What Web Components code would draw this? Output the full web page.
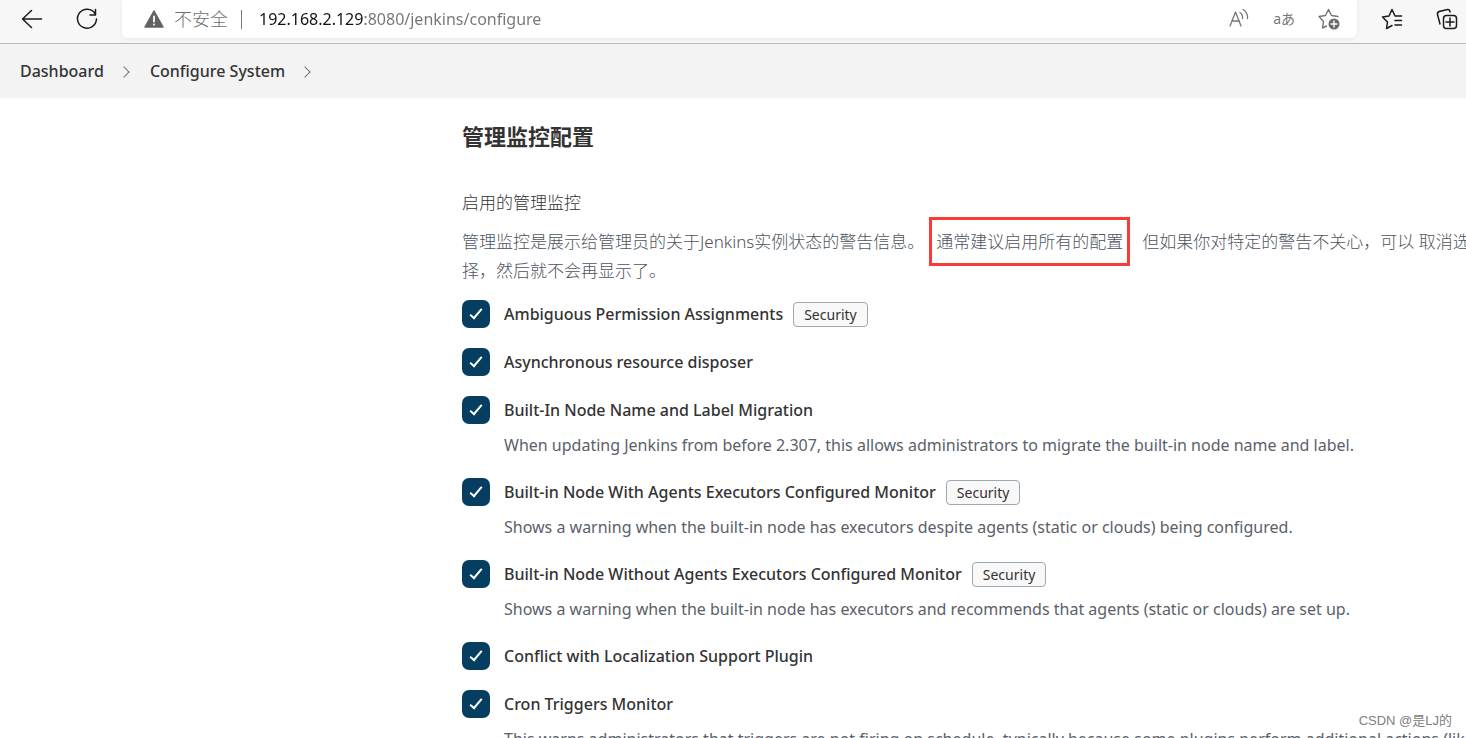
<!DOCTYPE html>
<html lang="zh-CN">
<head>
<meta charset="utf-8">
<title>Configure System [Jenkins]</title>
<style>
	body {
		margin: 0;
		height: 100vh;
		overflow: hidden;
		display: flex;
		flex-direction: column;
		background: #fff;
		color: #333;
		font: 16px/26px "Noto Sans", "Noto Sans CJK SC", sans-serif;
	}
</style>
</head>
<body>
<browser-bar host="192.168.2.129" path=":8080/jenkins/configure"></browser-bar>
<bread-crumbs>
	<a href="#">Dashboard</a>
	<a href="#">Configure System</a>
</bread-crumbs>
<config-section>
	<span slot="title">管理监控配置</span>
	<span slot="label">启用的管理监控</span>
	管理监控是展示给管理员的关于Jenkins实例状态的警告信息。<marked-text>通常建议启用所有的配置</marked-text>但如果你对特定的警告不关心，可以 取消选<br>择，然后就不会再显示了。
	<monitor-item slot="items" name="Ambiguous Permission Assignments" badge="Security"></monitor-item>
	<monitor-item slot="items" name="Asynchronous resource disposer"></monitor-item>
	<monitor-item slot="items" name="Built-In Node Name and Label Migration">When updating Jenkins from before 2.307, this allows administrators to migrate the built-in node name and label.</monitor-item>
	<monitor-item slot="items" name="Built-in Node With Agents Executors Configured Monitor" badge="Security">Shows a warning when the built-in node has executors despite agents (static or clouds) being configured.</monitor-item>
	<monitor-item slot="items" name="Built-in Node Without Agents Executors Configured Monitor" badge="Security">Shows a warning when the built-in node has executors and recommends that agents (static or clouds) are set up.</monitor-item>
	<monitor-item slot="items" name="Conflict with Localization Support Plugin"></monitor-item>
	<monitor-item slot="items" name="Cron Triggers Monitor">This warns administrators that triggers are not firing on schedule, typically because some plugins perform additional actions (like</monitor-item>
</config-section>
<water-mark>CSDN @是LJ的</water-mark>

<script>
/**
 * Dummy HTML tag function for syntax highlighters.
 * @returns {string} The original raw string.
 */
const html = x => x.raw[0];

/**
 * @param {string} name
 * @param {string} markup
 * @param {(shadow: ShadowRoot, host: HTMLElement) => void} [setup]
 */
function define(name, markup, setup) {
	const template = document.createElement("template");
	template.innerHTML = markup.trim();

	customElements.define(name, class extends HTMLElement {
		constructor() {
			super();
			const shadow = this.attachShadow({mode: "open"});
			shadow.appendChild(template.content.cloneNode(true));
			if (setup)
				setup(shadow, this);
		}
	});
}

define("browser-bar", html`
	<style>
		:host {
			display: flex;
			flex: none;
			height: 43px;
			background: #f7f7f7;
			border-bottom: 1px solid #b9bbba;
		}

		button {
			display: block;
			padding: 0;
			border: 0;
			background: none;
			color: inherit;
			font: inherit;
		}

		svg {
			display: block;
			fill: none;
			stroke: currentColor;
			stroke-linecap: round;
			stroke-linejoin: round;
		}

		.nav, .tools {
			display: flex;
			height: 38px;
			align-items: center;
			color: #1a1a1a;
		}

		.nav {
			gap: 31px;
			padding: 0 23px 0 20px;
		}

		.tools {
			gap: 31px;
			padding: 0 7px 0 23px;
		}

		.address {
			flex: 1;
			min-width: 0;
			display: flex;
			align-items: center;
			height: 38px;
			padding: 0 16px 0 22px;
			box-sizing: border-box;
			background: #fff;
			border-radius: 0 0 6px 6px;
			box-shadow: 0 1px 4px #0001;
			color: #6e6e6e;
		}

		.insecure {
			display: flex;
			align-items: center;
			gap: 10px;
			font-size: 18px;
			font-weight: 300;
		}

		.line {
			width: 1px;
			height: 19px;
			margin: 0 17px 0 13px;
			background: #767676;
		}

		input {
			flex: 1;
			min-width: 0;
			padding: 0;
			border: 0;
			outline: 0;
			font: inherit;
			color: transparent;
			background: linear-gradient(90deg, #111 106px, #757575 106px);
			-webkit-background-clip: text;
			background-clip: text;
		}

		.page {
			display: flex;
			gap: 22px;
			align-items: center;
			color: #757575;
			font-size: 14px;
		}
	</style>
	<div class="nav">
		<button aria-label="Back"><svg width="24" height="24" viewBox="0 0 24 24" stroke-width="1.5"><path d="M21.500 12H2.500M11.500 3.500L2.500 12l9 8.500"/></svg></button>
		<button aria-label="Refresh"><svg width="24" height="24" viewBox="0 0 24 24" stroke-width="1.5"><path d="M20 6.500A9.500 9.500 0 1 0 21.500 12M20.500 2.500v5.500h-5.500"/></svg></button>
	</div>
	<div class="address">
		<button class="insecure"><svg width="20" height="20" viewBox="0 0 20 20"><path d="M10 2L19 18H1Z" fill="#636363" stroke="#636363" stroke-width="1.500"/><path d="M10 7.500v5M10 15.500v.2" stroke="#fff" stroke-width="1.800"/></svg>不安全</button>
		<span class="line"></span>
		<input aria-label="Address" spellcheck="false">
		<div class="page">
			<button aria-label="Read aloud"><svg width="22" height="22" viewBox="0 0 22 22" stroke-width="1.300"><path d="M1 18L6.500 4 12 18M3 13h7.500M11 4.500q3 2 2.500 6M14 1.500q5 3 4.500 9"/></svg></button>
			<button aria-label="Translate">aあ</button>
			<button aria-label="Add to favorites"><svg width="24" height="24" viewBox="0 0 24 24" stroke-width="1.400"><path d="M9.500 19L5.500 21l1-6.500L2 9.500l6.500-1L11.500 2.500l3 6 6.500 1"/><circle cx="17" cy="17" r="5.500" fill="#6a6a6a" stroke="none"/><path d="M17 14v6M14 17h6" stroke="#fff"/></svg></button>
		</div>
	</div>
	<div class="tools">
		<button aria-label="Favorites"><svg width="24" height="24" viewBox="0 0 24 24" stroke-width="1.500"><path d="M12 18.500L6.500 21.500l1-6.500L2.500 10l6.500-1 3-6.500L15 9M15 9h6.500M15 13.500h6.500M15 18h6.500"/></svg></button>
		<button aria-label="Collections"><svg width="24" height="24" viewBox="0 0 24 24" stroke-width="1.500"><path d="M5 17L2.500 7.500q-.500-2 1.500-3L12.500 2.500q2-.500 2.500 2.500"/><rect x="8.500" y="8.500" width="13" height="13" rx="3"/><path d="M15 11v8M11 15h8"/></svg></button>
	</div>
`, (shadow, host) => {
	shadow.querySelector("input").value = host.getAttribute("host") + host.getAttribute("path");
});

define("bread-crumbs", html`
	<style>
		:host {
			display: block;
			flex: none;
			background: #f3f3f3;
		}

		nav {
			display: flex;
			align-items: center;
			height: 54px;
			padding: 0 20px;
		}

		::slotted(a) {
			color: #333;
			font-weight: 500;
			text-decoration: none;
		}

		::slotted(a)::after {
			content: "";
			display: inline-block;
			width: 7px;
			height: 7px;
			margin: 0 22px 1px 16px;
			border: solid #777;
			border-width: 1px 1px 0 0;
			rotate: 45deg;
		}
	</style>
	<nav aria-label="Breadcrumb"><slot></slot></nav>
`);

define("config-section", html`
	<style>
		:host {
			display: grid;
			grid-template-columns: 462px 1fr;
			flex: 1;
			min-height: 0;
		}

		main {
			grid-column: 2;
			min-width: 0;
			padding-top: 22px;
			white-space: nowrap;
		}

		h2 {
			margin: 0 0 36px;
			font-size: 22px;
			line-height: 32px;
		}

		h3, p {
			margin: 0;
			font-size: 17px;
			font-weight: 300;
			line-height: 29px;
		}

		h3 {
			margin-bottom: 10px;
		}

		p {
			margin-bottom: 15px;
			color: #4d545d;
		}

		.items {
			display: flex;
			flex-direction: column;
			gap: 20px;
		}
	</style>
	<main>
		<h2><slot name="title"></slot></h2>
		<h3><slot name="label"></slot></h3>
		<p><slot></slot></p>
		<div class="items"><slot name="items"></slot></div>
	</main>
`);

// No whitespace around the slot: the host is inline
define("marked-text", html`
	<style>
		:host {
			margin: 0 12px 0 5px;
			padding: 10px 4px;
			border: 3px solid #f93a37;
		}
	</style><slot></slot>
`);

define("monitor-item", html`
	<style>
		:host {
			display: flex;
			flex-direction: column;
			gap: 8px;
		}

		.row {
			display: flex;
			align-items: center;
			height: 28px;
		}

		input {
			appearance: none;
			flex: none;
			width: 28px;
			height: 28px;
			margin: 0 14px 0 0;
			border-radius: 7px;
			background: #063e61;
		}

		input:checked::before {
			content: "";
			display: block;
			width: 4px;
			height: 11px;
			margin: 6px 0 0 11px;
			border: solid #fff;
			border-width: 0 2px 2px 0;
			rotate: 40deg;
		}

		label {
			font-weight: 500;
		}

		.badge {
			margin-left: 10px;
			padding: 0 10px;
			border: 1px solid #9aa9b3;
			border-radius: 4px;
			background: #f8f8f8;
			font-size: 14px;
			line-height: 23px;
		}

		.description {
			margin-left: 42px;
			color: #5a616a;
		}
	</style>
	<div class="row">
		<input type="checkbox" id="check" checked>
		<label for="check"></label>
		<span class="badge"></span>
	</div>
	<div class="description"><slot></slot></div>
`, (shadow, host) => {
	const badge = shadow.querySelector(".badge");
	shadow.querySelector("label").textContent = host.getAttribute("name");
	badge.textContent = host.getAttribute("badge");

	if (!host.hasAttribute("badge"))
		badge.remove();

	if (!host.textContent)
		shadow.querySelector(".description").remove();
});

define("water-mark", html`
	<style>
		:host {
			position: absolute;
			right: 14px;
			bottom: 4px;
			color: #808080;
			font: 13px/26px "Liberation Sans", "Noto Sans CJK SC", sans-serif;
		}
	</style>
	<slot></slot>
`);
</script>
</body>
</html>
